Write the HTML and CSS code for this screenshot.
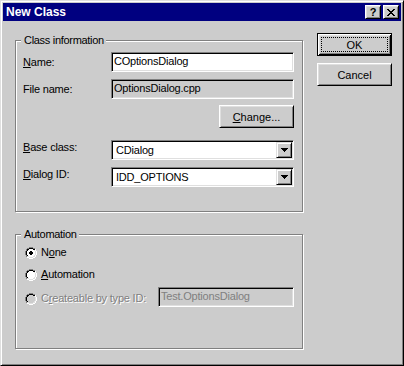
FILE: index.html
```html
<!DOCTYPE html>
<html lang="en">
<head>
    <meta charset="UTF-8">
    <meta name="viewport" content="width=device-width, initial-scale=1.0">
    <title>New Class</title>
    <link rel="stylesheet" href="styles.css">
</head>
<body>
    <div class="window">
        <div class="titlebar">
            <span class="title">New Class</span>
            <div class="caption-buttons">
                <button class="cap-btn help">?</button>
                <button class="cap-btn">
                    <svg width="8" height="7" viewBox="0 0 8 7" shape-rendering="crispEdges">
                        <path fill="#000" d="M0 0h2v1H0z M6 0h2v1H6z M1 1h2v1H1z M5 1h2v1H5z M2 2h4v1H2z M3 3h2v1H3z M2 4h4v1H2z M1 5h2v1H1z M5 5h2v1H5z M0 6h2v1H0z M6 6h2v1H6z"/>
                    </svg>
                </button>
            </div>
        </div>

        <div class="client">
            <div class="groups">
                <fieldset class="group group-info">
                    <legend>Class information</legend>

                    <div class="row row-name">
                        <label class="label" for="name"><u>N</u>ame:</label>
                        <div class="edit" id="name">COptionsDialog</div>
                    </div>

                    <div class="row row-file">
                        <span class="label">File name:</span>
                        <div class="edit readonly">OptionsDialog.cpp</div>
                    </div>

                    <div class="row row-change">
                        <button class="btn"><u>C</u>hange...</button>
                    </div>

                    <div class="row row-combo row-base">
                        <span class="label"><u>B</u>ase class:</span>
                        <div class="combo">
                            <span class="combo-text">CDialog</span>
                            <span class="combo-btn">
                                <svg width="7" height="4" viewBox="0 0 7 4" shape-rendering="crispEdges"><path fill="#000" d="M0 0h7v1H0z M1 1h5v1H1z M2 2h3v1H2z M3 3h1v1H3z"/></svg>
                            </span>
                        </div>
                    </div>

                    <div class="row row-combo row-dialog">
                        <span class="label"><u>D</u>ialog ID:</span>
                        <div class="combo">
                            <span class="combo-text">IDD_OPTIONS</span>
                            <span class="combo-btn">
                                <svg width="7" height="4" viewBox="0 0 7 4" shape-rendering="crispEdges"><path fill="#000" d="M0 0h7v1H0z M1 1h5v1H1z M2 2h3v1H2z M3 3h1v1H3z"/></svg>
                            </span>
                        </div>
                    </div>
                </fieldset>

                <fieldset class="group group-auto">
                    <legend>Automation</legend>

                    <div class="radio-row radio-none">
                        <svg class="radio" width="12" height="12" viewBox="0 0 12 12" shape-rendering="crispEdges">
                            <path fill="#fff" d="M4 2h4v1H4z M3 3h6v1H3z M2 4h8v4H2z M3 8h6v1H3z M4 9h4v1H4z"/>
                            <path fill="#808080" d="M4 0h4v1H4z M2 1h2v1H2z M8 1h2v1H8z M1 2h1v2H1z M0 4h1v4H0z M1 8h1v2H1z"/>
                            <path fill="#000" d="M4 1h4v1H4z M2 2h2v1H2z M8 2h2v1H8z M2 3h1v1H2z M1 4h1v4H1z M2 8h1v1H2z"/>
                            <path fill="#dfdfdf" d="M9 3h1v1H9z M10 4h1v4h-1z M9 8h1v1H9z M2 9h2v1H2z M8 9h2v1H8z M4 10h4v1H4z"/>
                            <path fill="#fff" d="M10 2h1v2h-1z M11 4h1v4h-1z M10 8h1v2h-1z M2 10h2v1H2z M8 10h2v1H8z M4 11h4v1H4z"/>
                            <path fill="#000" d="M5 4h2v1H5z M4 5h4v2H4z M5 7h2v1H5z"/>
                        </svg>
                        <span class="radio-label">N<u>o</u>ne</span>
                    </div>

                    <div class="radio-row radio-auto">
                        <svg class="radio" width="12" height="12" viewBox="0 0 12 12" shape-rendering="crispEdges">
                            <path fill="#fff" d="M4 2h4v1H4z M3 3h6v1H3z M2 4h8v4H2z M3 8h6v1H3z M4 9h4v1H4z"/>
                            <path fill="#808080" d="M4 0h4v1H4z M2 1h2v1H2z M8 1h2v1H8z M1 2h1v2H1z M0 4h1v4H0z M1 8h1v2H1z"/>
                            <path fill="#000" d="M4 1h4v1H4z M2 2h2v1H2z M8 2h2v1H8z M2 3h1v1H2z M1 4h1v4H1z M2 8h1v1H2z"/>
                            <path fill="#dfdfdf" d="M9 3h1v1H9z M10 4h1v4h-1z M9 8h1v1H9z M2 9h2v1H2z M8 9h2v1H8z M4 10h4v1H4z"/>
                            <path fill="#fff" d="M10 2h1v2h-1z M11 4h1v4h-1z M10 8h1v2h-1z M2 10h2v1H2z M8 10h2v1H8z M4 11h4v1H4z"/>
                        </svg>
                        <span class="radio-label"><u>A</u>utomation</span>
                    </div>

                    <div class="radio-row radio-type">
                        <svg class="radio" width="12" height="12" viewBox="0 0 12 12" shape-rendering="crispEdges">
                            <path fill="#cccccc" d="M4 2h4v1H4z M3 3h6v1H3z M2 4h8v4H2z M3 8h6v1H3z M4 9h4v1H4z"/>
                            <path fill="#808080" d="M4 0h4v1H4z M2 1h2v1H2z M8 1h2v1H8z M1 2h1v2H1z M0 4h1v4H0z M1 8h1v2H1z"/>
                            <path fill="#000" d="M4 1h4v1H4z M2 2h2v1H2z M8 2h2v1H8z M2 3h1v1H2z M1 4h1v4H1z M2 8h1v1H2z"/>
                            <path fill="#dfdfdf" d="M9 3h1v1H9z M10 4h1v4h-1z M9 8h1v1H9z M2 9h2v1H2z M8 9h2v1H8z M4 10h4v1H4z"/>
                            <path fill="#fff" d="M10 2h1v2h-1z M11 4h1v4h-1z M10 8h1v2h-1z M2 10h2v1H2z M8 10h2v1H8z M4 11h4v1H4z"/>
                        </svg>
                        <span class="radio-label disabled">C<u>r</u>eateable by type ID:</span>
                        <div class="edit disabled type-edit">Test.OptionsDialog</div>
                    </div>
                </fieldset>
            </div>

            <div class="actions">
                <button class="btn default">OK</button>
                <button class="btn">Cancel</button>
            </div>
        </div>
    </div>
</body>
</html>
```

FILE: styles.css
```css
* {
    box-sizing: border-box;
}
body {
    margin: 0;
    font-family: "Liberation Sans", Arial, sans-serif;
    font-size: 11px;
    line-height: 12px;
    background: #cccccc;
    color: #000;
}
u {
    text-decoration: underline;
    text-underline-offset: 1px;
}

/* window frame */
.window {
    width: 404px;
    height: 366px;
    background: #cccccc;
    border: 1px solid;
    border-color: #dfdfdf #000 #000 #dfdfdf;
    box-shadow: inset 1px 1px #fff, inset -1px -1px #808080;
    padding: 2px;
}
.titlebar {
    height: 18px;
    background: #000080;
    display: flex;
    align-items: center;
    justify-content: space-between;
    padding: 0 2px 0 3px;
}
.title {
    color: #fff;
    font-size: 12px;
    font-weight: bold;
}
.caption-buttons {
    display: flex;
    gap: 2px;
}
.cap-btn {
    width: 16px;
    height: 14px;
    padding: 0;
    background: #cccccc;
    border: 1px solid;
    border-color: #fff #000 #000 #fff;
    box-shadow: inset 1px 1px #dfdfdf, inset -1px -1px #808080;
    display: flex;
    align-items: center;
    justify-content: center;
    font-family: "Liberation Sans", Arial, sans-serif;
    font-size: 11px;
    font-weight: bold;
    line-height: 12px;
    color: #000;
}
.cap-btn svg {
    display: block;
    margin-top: 1px;
}

/* dialog body */
.client {
    display: flex;
    gap: 14px;
    padding: 12px 0 0 12px;
}
.groups {
    display: flex;
    flex-direction: column;
    width: 288px;
    margin-top: 1px;
}
.group {
    margin: 0;
    min-width: 0;
    padding: 5px 8px 0 7px;
    border: 1px solid #808080;
    box-shadow: inset 1px 1px #fff, 1px 1px #fff;
}
.group legend {
    padding: 0 2px 0 3px;
    margin-left: -2px;
    line-height: 13px;
    background: #cccccc;
    letter-spacing: -0.3px;
}
.group-info {
    height: 178px;
}
.group-auto {
    height: 121px;
    margin-top: 16px;
}

.row {
    display: flex;
    align-items: center;
}
.label {
    width: 88px;
    flex: none;
    letter-spacing: -0.2px;
}
.row-file {
    margin-top: 7px;
}
.row-change {
    margin-top: 6px;
    justify-content: flex-end;
}
.row-combo {
    align-items: flex-start;
}
.row-combo .label {
    margin-top: 1px;
}
.row-base {
    margin-top: 12px;
}
.row-dialog {
    margin-top: 7px;
}

/* sunken edit field */
.edit {
    width: 183px;
    height: 20px;
    flex: none;
    background: #fff;
    border: 1px solid;
    border-color: #808080 #fff #fff #808080;
    box-shadow: inset 1px 1px #000, inset -1px -1px #dfdfdf;
    padding: 0 0 0 2px;
    line-height: 17px;
    letter-spacing: -0.2px;
    white-space: nowrap;
    overflow: hidden;
}
.edit.readonly {
    background: #cccccc;
}
.edit.disabled {
    background: #cccccc;
    color: #808080;
}

/* drop-down combo */
.combo {
    width: 183px;
    height: 20px;
    display: flex;
    align-items: center;
    background: #fff;
    border: 1px solid;
    border-color: #808080 #fff #fff #808080;
    box-shadow: inset 1px 1px #000, inset -1px -1px #dfdfdf;
    padding: 1px 1px 1px 4px;
}
.combo-text {
    flex: 1;
    line-height: 16px;
    letter-spacing: -0.2px;
}
.combo-btn {
    width: 16px;
    height: 16px;
    display: flex;
    align-items: center;
    justify-content: center;
    background: #cccccc;
    border: 1px solid;
    border-color: #dfdfdf #000 #000 #dfdfdf;
    box-shadow: inset 1px 1px #fff, inset -1px -1px #808080;
}
.combo-btn svg {
    display: block;
}

/* radio buttons */
.radio-row {
    display: flex;
    align-items: flex-start;
    height: 13px;
}
.radio {
    display: block;
    flex: none;
    margin: 1px 4px 0 2px;
}
.radio-label {
    letter-spacing: -0.2px;
    white-space: nowrap;
}
.radio-label.disabled {
    color: #808080;
    text-shadow: 1px 1px #fff;
}
.radio-auto {
    margin-top: 9px;
}
.radio-type {
    margin-top: 6px;
    height: 20px;
}
.radio-type .radio {
    margin-top: 6px;
}
.radio-type .radio-label {
    margin-top: 5px;
    flex: 1;
}
.type-edit {
    width: 136px;
}

/* push buttons */
.actions {
    display: flex;
    flex-direction: column;
    gap: 7px;
}
.btn {
    width: 75px;
    height: 23px;
    padding: 0;
    background: #cccccc;
    border: 1px solid;
    border-color: #fff #000 #000 #fff;
    box-shadow: inset 1px 1px #dfdfdf, inset -1px -1px #808080;
    font-family: "Liberation Sans", Arial, sans-serif;
    font-size: 11px;
    line-height: 12px;
    color: #000;
}
.btn.default {
    border-color: #000;
    box-shadow: inset 1px 1px #fff, inset -1px -1px #000, inset 2px 2px #dfdfdf, inset -2px -2px #808080;
    outline: 1px dotted #000;
    outline-offset: -5px;
}
```
